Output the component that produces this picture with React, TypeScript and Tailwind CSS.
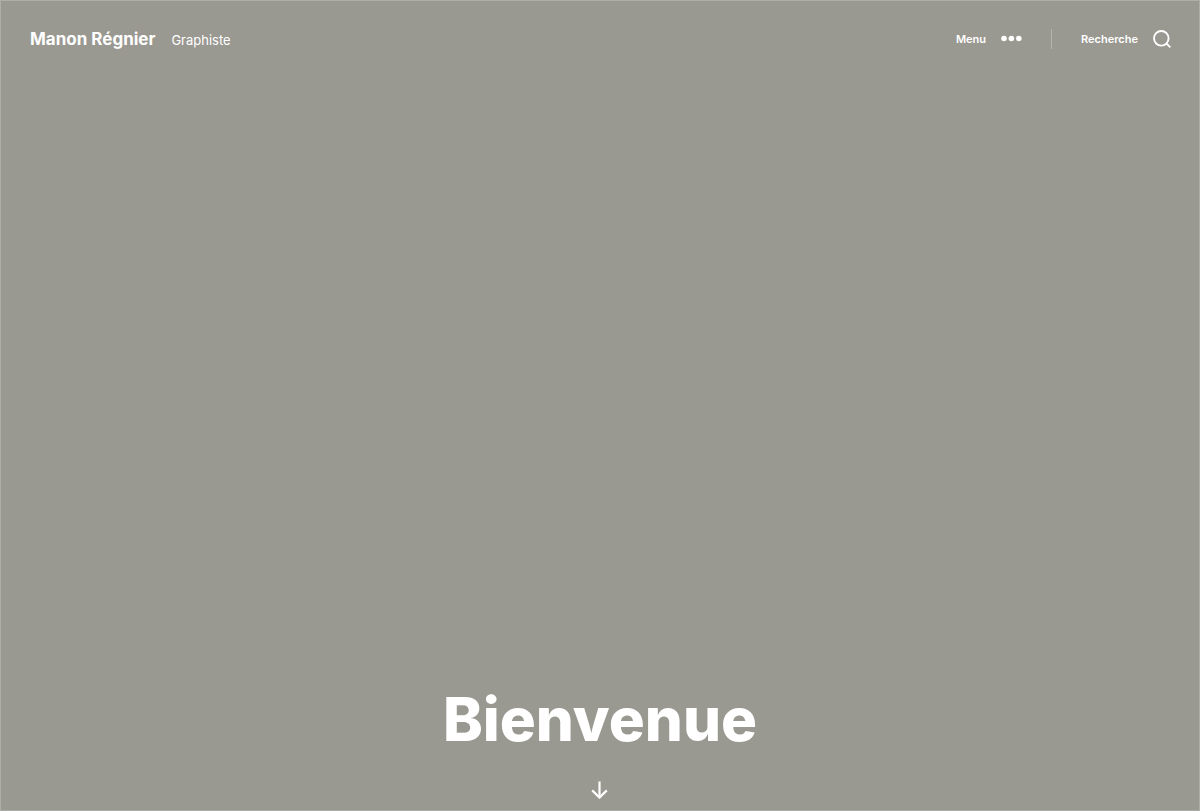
import React from "react";

function DotsIcon() {
    return (
        <svg width="21" height="8" viewBox="0 0 21 8" fill="currentColor" aria-hidden="true">
            <circle cx="3" cy="3.5" r="2.8" />
            <circle cx="10.4" cy="3.5" r="2.8" />
            <circle cx="17.8" cy="3.5" r="2.8" />
        </svg>
    );
}

function SearchIcon() {
    return (
        <svg width="18" height="18" viewBox="0 0 18 18" fill="none" stroke="currentColor" strokeWidth="1.9" aria-hidden="true">
            <circle cx="8.3" cy="8.3" r="7.3" />
            <path d="M13.5 13.5L17.3 17.3" />
        </svg>
    );
}

function ArrowDownIcon() {
    return (
        <svg width="18" height="18" viewBox="0 0 18 18" fill="none" stroke="currentColor" strokeWidth="2.2" aria-hidden="true">
            <path d="M8.5 0.5V16.2" />
            <path d="M1.2 9.4L8.5 16.6L15.8 9.4" />
        </svg>
    );
}

export default function App() {
    return (
        <div className="flex min-h-screen flex-col border border-[#adada9] bg-[#999891] font-['Inter','Liberation_Sans',sans-serif] text-white">
            <header className="flex items-center justify-between pt-6 pr-7 pl-[29px]">
                <div className="flex items-baseline gap-4">
                    <a href="#" className="text-[17px] leading-7 font-bold">Manon Régnier</a>
                    <p className="text-[13px] leading-5">Graphiste</p>
                </div>
                <div className="flex items-center text-[11px] leading-4 font-semibold">
                    <button type="button" className="flex cursor-pointer items-center gap-[15px]">
                        Menu
                        <DotsIcon />
                    </button>
                    <div className="mx-[29px] h-5 w-px bg-[#b5b5b0]"></div>
                    <button type="button" className="flex cursor-pointer items-center gap-[15px]">
                        Recherche
                        <SearchIcon />
                    </button>
                </div>
            </header>
            <main className="flex flex-1 flex-col items-center justify-end gap-8 pb-[11px]">
                <h1 className="text-6xl font-extrabold">Bienvenue</h1>
                <a href="#contenu" aria-label="Défiler vers le bas">
                    <ArrowDownIcon />
                </a>
            </main>
        </div>
    );
}
